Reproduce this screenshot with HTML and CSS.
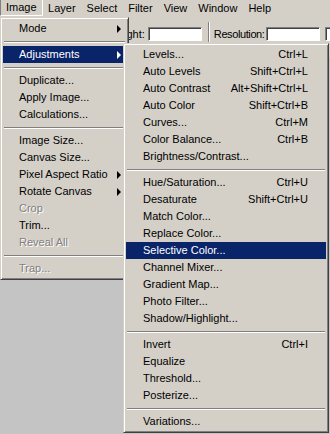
FILE: index.html
```html
<!DOCTYPE html>
<html lang="en">
<head>
    <meta charset="UTF-8">
    <title>Image Menu</title>
    <link rel="stylesheet" href="styles.css">
</head>
<body>
    <div class="menubar">
        <span class="top-item open">Image</span>
        <span class="top-item">Layer</span>
        <span class="top-item">Select</span>
        <span class="top-item">Filter</span>
        <span class="top-item">View</span>
        <span class="top-item">Window</span>
        <span class="top-item">Help</span>
    </div>

    <div class="optionsbar">
        <label class="field-label">Height:</label>
        <div class="field narrow"></div>
        <div class="etched"></div>
        <label class="field-label tight">Resolution:</label>
        <div class="field narrow"></div>
        <div class="field"></div>
    </div>

    <div class="workspace"></div>

    <div class="menu image-menu">
        <div class="item">Mode<i class="arrow"></i></div>
        <div class="sep"></div>
        <div class="item active">Adjustments<i class="arrow"></i></div>
        <div class="sep"></div>
        <div class="item">Duplicate...</div>
        <div class="item">Apply Image...</div>
        <div class="item">Calculations...</div>
        <div class="sep"></div>
        <div class="item">Image Size...</div>
        <div class="item">Canvas Size...</div>
        <div class="item">Pixel Aspect Ratio<i class="arrow"></i></div>
        <div class="item">Rotate Canvas<i class="arrow"></i></div>
        <div class="item disabled">Crop</div>
        <div class="item">Trim...</div>
        <div class="item disabled">Reveal All</div>
        <div class="sep"></div>
        <div class="item disabled">Trap...</div>
    </div>

    <div class="menu adjust-menu">
        <div class="item">Levels...<span class="key">Ctrl+L</span></div>
        <div class="item">Auto Levels<span class="key">Shift+Ctrl+L</span></div>
        <div class="item">Auto Contrast<span class="key">Alt+Shift+Ctrl+L</span></div>
        <div class="item">Auto Color<span class="key">Shift+Ctrl+B</span></div>
        <div class="item">Curves...<span class="key">Ctrl+M</span></div>
        <div class="item">Color Balance...<span class="key">Ctrl+B</span></div>
        <div class="item">Brightness/Contrast...</div>
        <div class="sep"></div>
        <div class="item">Hue/Saturation...<span class="key">Ctrl+U</span></div>
        <div class="item">Desaturate<span class="key">Shift+Ctrl+U</span></div>
        <div class="item">Match Color...</div>
        <div class="item">Replace Color...</div>
        <div class="item active">Selective Color...</div>
        <div class="item">Channel Mixer...</div>
        <div class="item">Gradient Map...</div>
        <div class="item">Photo Filter...</div>
        <div class="item">Shadow/Highlight...</div>
        <div class="sep"></div>
        <div class="item">Invert<span class="key">Ctrl+I</span></div>
        <div class="item">Equalize</div>
        <div class="item">Threshold...</div>
        <div class="item">Posterize...</div>
        <div class="sep"></div>
        <div class="item">Variations...</div>
    </div>
</body>
</html>
```

FILE: styles.css
```css
:root {
    --face: #d4d0c8;
    --shade: #808080;
    --dark: #404040;
    --light: #ffffff;
    --select: #0a246a;
    --workspace: #c4c4c4;
}

body {
    margin: 0;
    width: 330px;
    height: 434px;
    overflow: hidden;
    position: relative;
    display: flex;
    flex-direction: column;
    background: var(--workspace);
    color: #000;
    font-family: 'Liberation Sans', Arial, sans-serif;
    font-size: 11px;
}

/* top menu bar */
.menubar {
    display: flex;
    height: 17px;
    background: var(--face);
}

.top-item {
    padding: 0 5.5px;
    line-height: 16px;
}

.top-item.open {
    padding: 0 5px;
    border: 1px solid;
    border-color: var(--shade) var(--light) var(--light) var(--shade);
    border-top: none;
    line-height: 15px;
    height: 15px;
}

/* tool options bar */
.optionsbar {
    display: flex;
    align-items: flex-start;
    height: 30px;
    padding: 10px 0 0 110px;
    overflow: hidden;
    background: var(--face);
}

.field-label {
    line-height: 14px;
    margin-right: 3px;
    white-space: nowrap;
}

.field-label.tight {
    letter-spacing: -0.4px;
    margin-right: 1px;
}

.field {
    width: 54px;
    height: 14px;
    box-sizing: border-box;
    background: var(--light);
    border: 1px solid;
    border-color: var(--shade) var(--light) var(--light) var(--shade);
    box-shadow: inset 1px 1px var(--dark);
    flex-shrink: 0;
}

.field.narrow {
    margin-right: 5px;
}

.etched {
    width: 0;
    height: 20px;
    margin: -5px 4px 0 1px;
    border-left: 1px solid var(--shade);
    border-right: 1px solid var(--light);
    flex-shrink: 0;
}

.workspace {
    flex: 1;
    background: var(--workspace);
}

/* drop-down menus */
.menu {
    position: absolute;
    padding: 2px;
    background: var(--face);
    border: 1px solid;
    border-color: var(--face) var(--dark) var(--dark) var(--face);
    box-shadow: inset 1px 1px var(--light), inset -1px -1px var(--shade);
}

.image-menu {
    left: 0;
    top: 17px;
    width: 123px;
}

.adjust-menu {
    left: 123px;
    top: 43px;
    width: 200px;
}

.item {
    display: flex;
    align-items: center;
    height: 17px;
    line-height: 17px;
    padding: 0 18px 0 16px;
    white-space: nowrap;
}

.image-menu .item {
    padding-right: 5px;
}

.adjust-menu .item {
    padding-left: 17px;
}

.item.active {
    background: var(--select);
    color: var(--light);
}

.item.disabled {
    color: var(--shade);
    text-shadow: 1px 1px 0 var(--light);
}

.key {
    margin-left: auto;
}

.arrow {
    margin-left: auto;
    width: 0;
    height: 0;
    border-left: 4px solid #000;
    border-top: 4px solid transparent;
    border-bottom: 4px solid transparent;
}

.item.active .arrow {
    border-left-color: var(--light);
}

.sep {
    height: 9px;
    box-sizing: border-box;
    padding-top: 4px;
    margin: 0 1px;
}

.sep::before {
    content: '';
    display: block;
    border-top: 1px solid var(--shade);
    border-bottom: 1px solid var(--light);
}
```
